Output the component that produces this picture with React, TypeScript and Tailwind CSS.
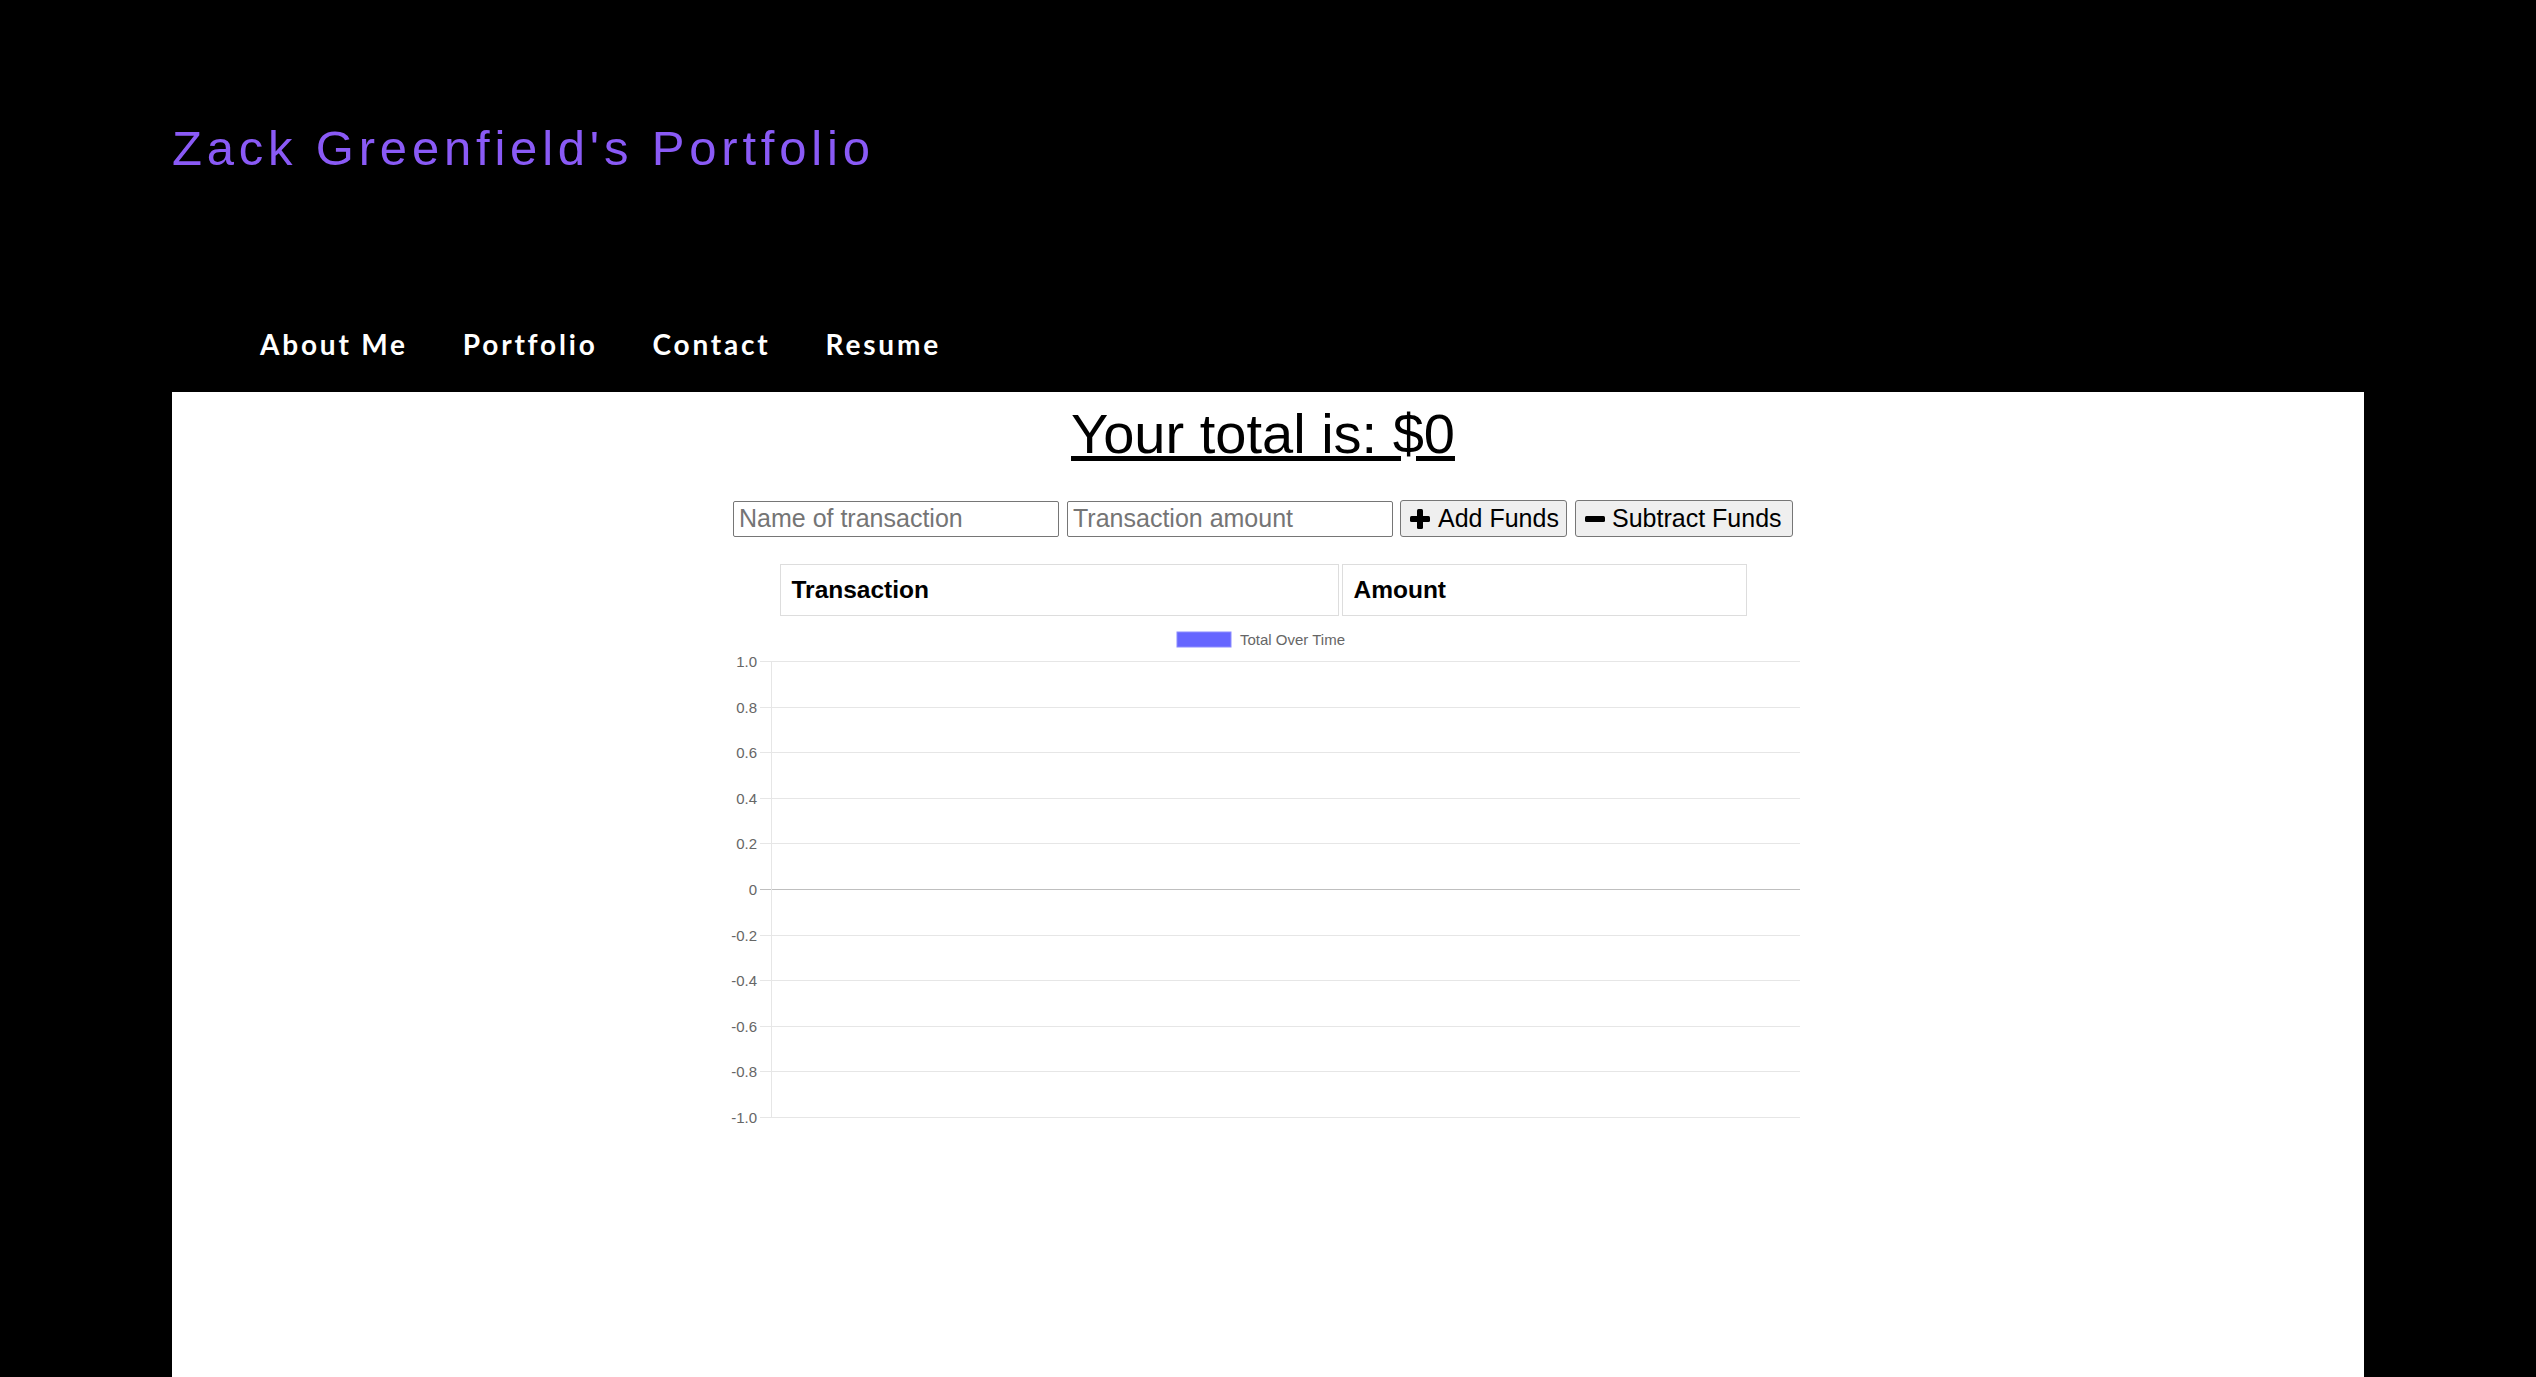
const ticks = ["1.0", "0.8", "0.6", "0.4", "0.2", "0", "-0.2", "-0.4", "-0.6", "-0.8", "-1.0"];

function PlusIcon() {
  return (
    <svg width={20} height={20} viewBox="0 0 20 20" className="block">
      <rect x={7} y={0} width={6} height={20} rx={1.5} fill="#000" />
      <rect x={0} y={7} width={20} height={6} rx={1.5} fill="#000" />
    </svg>
  );
}

function MinusIcon() {
  return (
    <svg width={20} height={20} viewBox="0 0 20 20" className="block">
      <rect x={0} y={7} width={20} height={6} rx={1.5} fill="#000" />
    </svg>
  );
}

function Chart() {
  const top = 41;
  const step = 45.6;
  const left = 53;
  const right = 1082;
  return (
    <svg width={1090} height={510} className="block" style={{ fontFamily: "'Liberation Sans', Arial, sans-serif" }}>
      <rect x={459} y={12} width={54} height={15} fill="#6666ff" stroke="#8c8cff" strokeWidth={1} />
      <text x={522} y={25} fontSize={15} fill="#666">Total Over Time</text>
      {ticks.map((t, i) => {
        const y = Math.round(top + i * step) + 0.5;
        return (
          <g key={t}>
            <line x1={left - 11} x2={right} y1={y} y2={y} stroke={t === "0" ? "#bfbfbf" : "#e6e6e6"} strokeWidth={1} />
            <text x={39} y={y + 5} fontSize={15} fill="#666" textAnchor="end">{t}</text>
          </g>
        );
      })}
      <line x1={left + 0.5} x2={left + 0.5} y1={top} y2={Math.round(top + 10 * step) + 1} stroke="#e6e6e6" strokeWidth={1} />
    </svg>
  );
}

export default function App() {
  return (
    <div className="min-h-screen bg-black flex flex-col font-['Liberation_Sans',Arial,sans-serif]">
      <header className="pl-[172px] pt-[120px] pb-[28px]">
        <h1 className="text-[49px] leading-[56px] tracking-[4.8px] text-[#8a5af6] font-normal">
          Zack Greenfield's Portfolio
        </h1>
        <nav className="mt-[148px] pl-[88px]">
          <ul className="flex gap-[55px] text-[28px] leading-[40px] font-bold text-white tracking-[2.8px] font-['Comic_Sans_MS','Lato',sans-serif]">
            <li>About Me</li>
            <li>Portfolio</li>
            <li>Contact</li>
            <li>Resume</li>
          </ul>
        </nav>
      </header>
      <main className="flex-1 mx-[172px] bg-white pt-[10px]">
        <div className="flex flex-col items-center pr-[10px]">
          <h2 className="text-[56px] leading-[64px] underline text-black font-normal">Your total is: $0</h2>
          <div className="mt-[34px] flex items-center h-[37px]">
            <input
              placeholder="Name of transaction"
              className="w-[326px] h-[36px] border border-[#767676] rounded-[2px] px-[5px] text-[25px] placeholder:text-[#757575] text-black outline-none"
            />
            <input
              placeholder="Transaction amount"
              className="ml-[8px] w-[326px] h-[36px] border border-[#767676] rounded-[2px] px-[5px] text-[25px] placeholder:text-[#757575] text-black outline-none"
            />
            <button className="ml-[7px] w-[167px] h-[37px] bg-[#efefef] border border-[#767676] rounded-[3px] flex items-center pl-[9px] gap-[8px] text-[25px] text-black">
              <PlusIcon />
              <span>Add Funds</span>
            </button>
            <button className="ml-[8px] w-[218px] h-[37px] bg-[#efefef] border border-[#767676] rounded-[3px] flex items-center pl-[9px] gap-[7px] text-[25px] text-black">
              <MinusIcon />
              <span>Subtract Funds</span>
            </button>
          </div>
          <table className="mt-[24px] border-separate border-spacing-[3px]">
            <thead>
              <tr>
                <th className="w-[559px] h-[52px] border border-[#dddddd] text-left px-[11px] text-[24.5px] font-bold text-black">Transaction</th>
                <th className="w-[405px] h-[52px] border border-[#dddddd] text-left px-[11px] text-[24.5px] font-bold text-black">Amount</th>
              </tr>
            </thead>
          </table>
          <div className="mt-[1px]">
            <Chart />
          </div>
        </div>
      </main>
    </div>
  );
}
